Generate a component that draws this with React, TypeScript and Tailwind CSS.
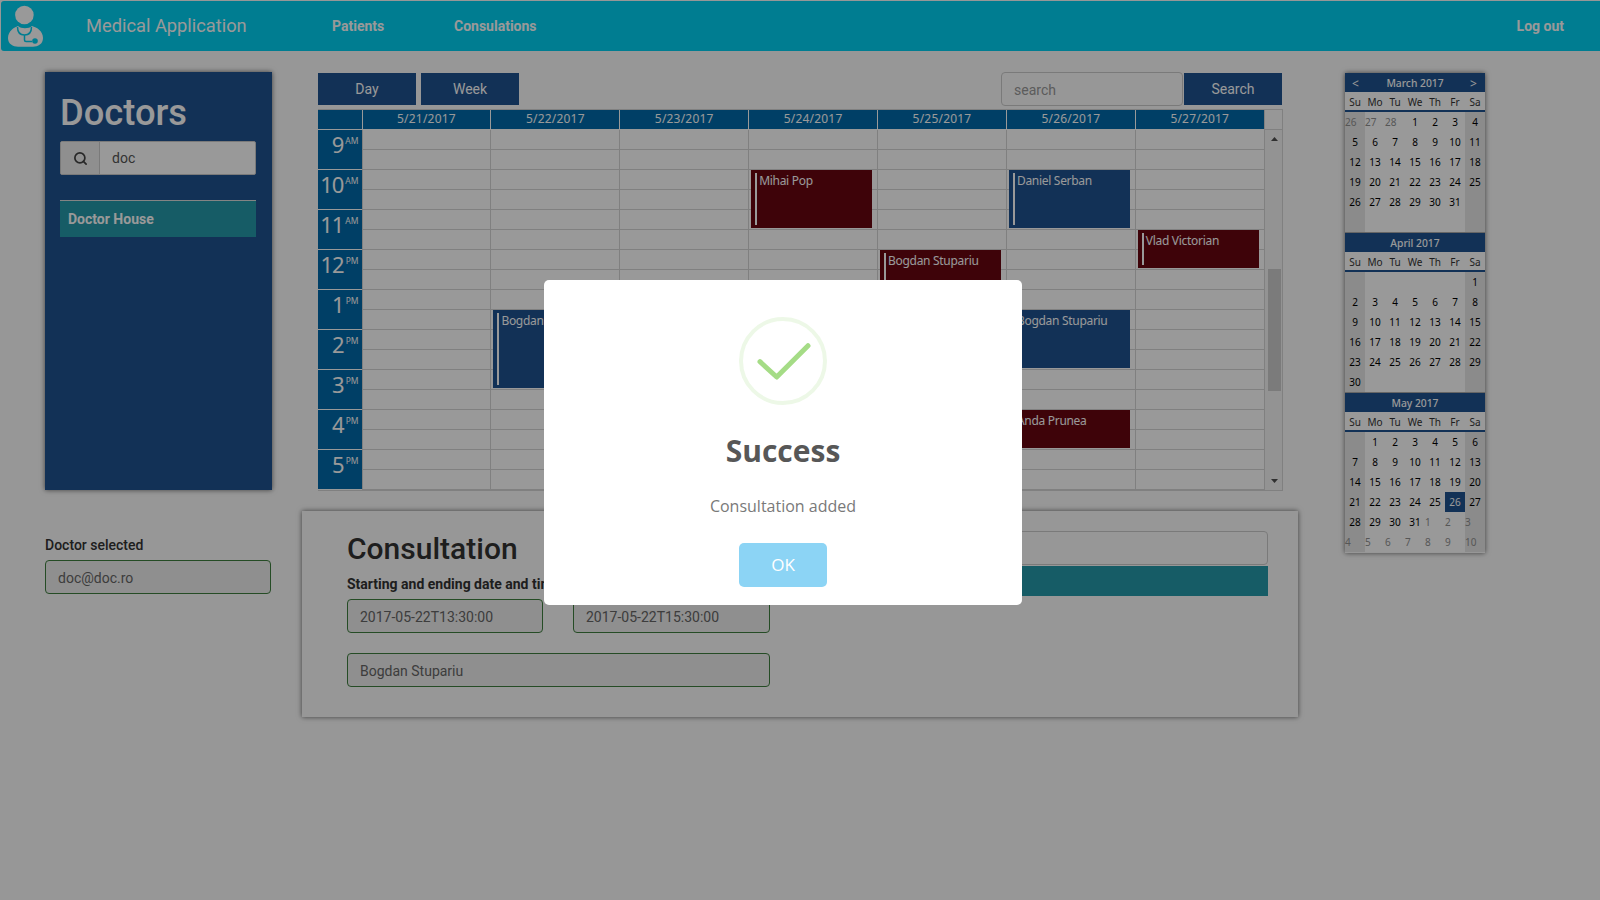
import { Search } from "lucide-react";

type Cell = { t: string; other?: boolean; today?: boolean };

const range = (a: number, b: number, other = false): Cell[] => {
  const out: Cell[] = [];
  for (let i = a; i <= b; i++) out.push({ t: String(i), other });
  return out;
};
const blank = (n: number): Cell[] => Array.from({ length: n }, () => ({ t: "" }));

const months: { title: string; nav?: boolean; cells: Cell[] }[] = [
  { title: "March 2017", nav: true, cells: [...range(26, 28, true), ...range(1, 31), ...blank(8)] },
  { title: "April 2017", cells: [...blank(6), ...range(1, 30), ...blank(6)] },
  {
    title: "May 2017",
    cells: [
      ...blank(1),
      ...range(1, 25),
      { t: "26", today: true },
      ...range(27, 31),
      ...range(1, 10, true),
    ],
  },
];

const weekdays = ["Su", "Mo", "Tu", "We", "Th", "Fr", "Sa"];
const dates = ["5/21/2017", "5/22/2017", "5/23/2017", "5/24/2017", "5/25/2017", "5/26/2017", "5/27/2017"];
const hours = [
  ["9", "AM"],
  ["10", "AM"],
  ["11", "AM"],
  ["12", "PM"],
  ["1", "PM"],
  ["2", "PM"],
  ["3", "PM"],
  ["4", "PM"],
  ["5", "PM"],
];

const events: Record<number, { name: string; cls: string; bar: string }[]> = {
  1: [{ name: "Bogdan Stupariu", cls: "top-[180px] h-[78px] bg-[#1e5290]", bar: "h-[72px]" }],
  3: [{ name: "Mihai Pop", cls: "top-[40px] h-[58px] bg-[#68050f]", bar: "h-[52px]" }],
  4: [{ name: "Bogdan Stupariu", cls: "top-[120px] h-[58px] bg-[#68050f]", bar: "h-[52px]" }],
  5: [
    { name: "Daniel Serban", cls: "top-[40px] h-[58px] bg-[#1e5290]", bar: "h-[52px]" },
    { name: "Bogdan Stupariu", cls: "top-[180px] h-[58px] bg-[#1e5290]", bar: "h-[52px]" },
    { name: "Anda Prunea", cls: "top-[280px] h-[38px] bg-[#68050f]", bar: "h-[32px]" },
  ],
  6: [{ name: "Vlad Victorian", cls: "top-[100px] h-[38px] bg-[#68050f]", bar: "h-[32px]" }],
};

function Logo() {
  return (
    <svg width="36" height="42" viewBox="0 0 36 42" className="shrink-0">
      <circle cx="16.400" cy="10" r="9.300" fill="#fff" />
      <path d="M0 33C0 26 6 22.500 10 21C13 24 21 24 24 21C29 22.500 35 26 35 33C35 39 30 41.700 25 41.700H10C5 41.700 0 39 0 33z" fill="#fff" />
      <path d="M9.500 22C9.500 27 12 30 16.500 30C21 30 23.500 27 23.500 22M16.500 30V35C16.500 36 17 36.500 18 36.500H24" fill="none" stroke="#00d0f2" strokeWidth="1.500" />
      <circle cx="27" cy="36" r="2.800" fill="#00d0f2" />
    </svg>
  );
}

function Month({ title, nav, cells }: { title: string; nav?: boolean; cells: Cell[] }) {
  return (
    <div className="h-[160px] font-['Noto_Sans',sans-serif] text-[10px] text-black border-b border-[#aaa] last:border-b-0">
      <div className="h-[19px] flex items-center justify-between px-[7px] pt-[2px] bg-[#1e5290] text-white leading-[17px]">
        <span className="w-[8px] text-[12px]">{nav ? "<" : ""}</span>
        <span className="text-[10.300px] font-medium">{title}</span>
        <span className="w-[8px] text-[12px]">{nav ? ">" : ""}</span>
      </div>
      <div className="h-[20px] grid grid-cols-7 bg-white border-b-2 border-[#1e5290] text-[#333]">
        {weekdays.map((d) => (
          <div key={d} className="text-center leading-[20px]">
            {d}
          </div>
        ))}
      </div>
      <div className="grid grid-cols-7 auto-rows-[20px]">
        {cells.map((c, i) => {
          const weekend = i % 7 === 0 || i % 7 === 6;
          let cls = weekend ? "bg-[#e8e8e8] text-center" : "bg-white text-center";
          if (c.other) cls = (weekend ? "bg-[#e8e8e8]" : "bg-white") + " text-left text-[#909090]";
          if (c.today) cls = "bg-[#1e5290] text-white text-center";
          return (
            <div key={i} className={cls + " leading-[20px]"}>
              {c.t}
            </div>
          );
        })}
      </div>
    </div>
  );
}

function Calendar() {
  return (
    <div className="mt-[4px] w-[965px] h-[382px] border-t border-r border-b border-[#d5d5d5] font-['Noto_Sans',sans-serif] text-white">
      <div className="flex h-[20px]">
        <div className="w-[43.500px] bg-[#006aaa] border-b border-white" />
        <div className="grid grid-cols-[repeat(7,128.900px)] bg-[#006aaa] border-b border-white">
          {dates.map((d) => (
            <div key={d} className="border-l border-white text-center text-[12px] leading-[18px] tracking-[0.2px]">
              {d}
            </div>
          ))}
        </div>
        <div className="flex-1 border-l border-[#d5d5d5] border-b" />
      </div>
      <div className="flex h-[360px]">
        <div className="w-[43.500px] shrink-0">
          {hours.map(([h, ap]) => (
            <div key={h} className="h-[40px] bg-[#006aaa] border-b border-white flex justify-end pr-[3px]">
              <span className="text-[22px] leading-[29px] tracking-[-1px]">{h}</span>
              <span className="text-[8.500px] leading-[10px] mt-[6px] ml-[2px]">{ap}</span>
            </div>
          ))}
        </div>
        <div className="grid grid-cols-[repeat(7,128.900px)] shrink-0">
          {dates.map((d, i) => (
            <div key={d} className="relative border-l border-[#d5d5d5] bg-white">
              {Array.from({ length: 18 }, (_, r) => (
                <div key={r} className="h-[20px] border-b border-[#d5d5d5]" />
              ))}
              {(events[i] || []).map((e) => (
                <div key={e.name} className={"absolute left-[2px] w-[121px] flex pt-[3px] pl-[4px] " + e.cls}>
                  <div className={"w-[2px] bg-white shrink-0 " + e.bar} />
                  <div className="ml-[2px] text-[12px] leading-[16px] tracking-[-0.3px] whitespace-nowrap">{e.name}</div>
                </div>
              ))}
            </div>
          ))}
        </div>
        <div className="flex-1 border-l border-[#d5d5d5] bg-[#f5f5f5] flex flex-col pl-[3px]">
          <svg width="13" height="4" viewBox="0 0 13 4" className="mt-[7px] shrink-0">
            <path d="M3 4L6.500 0L10 4z" fill="#505050" />
          </svg>
          <div className="mt-[128px] w-[13px] h-[122px] bg-[#cdcdcd]" />
          <svg width="13" height="4" viewBox="0 0 13 4" className="mt-[88px] shrink-0">
            <path d="M3 0L10 0L6.500 4z" fill="#505050" />
          </svg>
        </div>
      </div>
    </div>
  );
}

const greenInput =
  "h-[34px] rounded-[4px] border border-[#3f7f3f] bg-[#eee] px-[12px] text-[14px] leading-[34px] text-[#666]";

export default function App() {
  return (
    <div className="relative w-full h-[900px] overflow-hidden bg-[#fcfcfc] font-['Roboto',sans-serif]">
      <div className="h-px" />
      <nav className="ml-px h-[50px] flex items-center rounded-l-[3px] bg-[#00d0f2] text-white pl-[7px] pr-[36px]">
        <Logo />
        <div className="ml-[42px] w-[246px] text-[18.300px]">Medical Application</div>
        <div className="w-[122px] text-[14px] font-bold">Patients</div>
        <div className="text-[14px] font-bold">Consulations</div>
        <div className="ml-auto text-[14px] font-bold">Log out</div>
      </nav>

      <main className="flex pt-[21px]">
        <aside className="ml-[45px] w-[227px] shrink-0">
          <div className="h-[418px] bg-[#1e5290] pl-[15px] pr-[16px] pt-[21px] shadow-[0_0_5px_rgba(0,0,0,0.6)]">
            <h1 className="text-[36.300px] leading-[40px] font-medium text-white">Doctors</h1>
            <div className="mt-[8px] h-[34px] flex rounded-[2px] border border-[#ccc] bg-white">
              <div className="w-[39px] flex items-center justify-center bg-[#eee] border-r border-[#ccc]">
                <Search size={15} strokeWidth={2.750} className="text-[#444]" />
              </div>
              <div className="pl-[12px] text-[14px] leading-[33px] text-[#555]">doc</div>
            </div>
            <div className="mt-[25px] h-[37px] border-t border-[#ddd] bg-[#2699aa] pl-[8px] text-[14px] leading-[36px] font-bold text-white">
              Doctor House
            </div>
          </div>
          <div className="mt-[45px] text-[14px] leading-[20px] font-medium text-[#333]">Doctor selected</div>
          <div className={"mt-[5px] w-[226px] " + greenInput}>doc@doc.ro</div>
        </aside>

        <section className="ml-[30px] w-[996px] shrink-0 pt-px">
          <div className="ml-[16px] w-[965px]">
            <div className="flex h-[32px] pr-px text-[14px] text-white">
              <button className="w-[98px] h-full bg-[#1e5290]">Day</button>
              <button className="ml-[5px] w-[98px] h-full bg-[#1e5290]">Week</button>
              <div className="ml-auto -mt-px h-[34px] w-[182px] rounded-[4px] border border-[#ccc] bg-[#fcfcfc] px-[12px] leading-[34px] text-[#999]">
                search
              </div>
              <button className="ml-px w-[98px] h-full bg-[#1e5290]">Search</button>
            </div>
            <Calendar />
          </div>

          <div className="mt-[20px] h-[206px] flex pl-[45px] pr-[30px] pt-[20px] shadow-[0_0_5px_rgba(0,0,0,0.6)] bg-[#fcfcfc]">
            <div className="w-[423px] shrink-0">
              <h2 className="text-[30px] leading-[36px] font-medium text-[#333]">Consultation</h2>
              <div className="mt-[7px] text-[14px] leading-[20px] font-bold text-[#333] whitespace-nowrap">
                Starting and ending date and time
              </div>
              <div className="mt-[5px] flex justify-between">
                <div className={"w-[196px] " + greenInput}>2017-05-22T13:30:00</div>
                <div className={"w-[197px] " + greenInput}>2017-05-22T15:30:00</div>
              </div>
              <div className={"mt-[20px] " + greenInput}>Bogdan Stupariu</div>
            </div>
            <div className="ml-[30px] flex-1">
              <div className="h-[34px] rounded-[4px] border border-[#ccc]" />
              <div className="mt-px h-[30px] bg-[#2699aa]" />
            </div>
          </div>
        </section>

        <aside className="ml-[47px] w-[140px] shrink-0 self-start mt-px shadow-[0_0_5px_rgba(0,0,0,0.6)]">
          {months.map((m) => (
            <Month key={m.title} {...m} />
          ))}
        </aside>
      </main>

      <div className="fixed inset-0 bg-black/40 flex items-start pl-[544px] pt-[280px]">
        <div className="w-[478px] h-[325px] rounded-[5px] bg-white flex flex-col items-center pt-[37px] font-['Open_Sans',sans-serif]">
          <svg width="88" height="88" viewBox="0 0 88 88" className="shrink-0">
            <circle cx="44" cy="44" r="42" fill="none" stroke="#a5dc86" strokeOpacity="0.2" strokeWidth="4" />
            <path d="M21 44.700L37.700 60L69 28.700" fill="none" stroke="#a5dc86" strokeWidth="5" strokeLinecap="round" strokeLinejoin="round" />
          </svg>
          <div className="mt-[26px] text-[30px] leading-[40px] font-bold text-[#575757]">Success</div>
          <div className="mt-[23px] text-[16px] leading-[24px] text-[#797979]">Consultation added</div>
          <button className="mt-[25px] w-[88px] h-[44px] rounded-[5px] bg-[#8cd4f5] text-[17px] text-white">OK</button>
        </div>
      </div>
    </div>
  );
}
